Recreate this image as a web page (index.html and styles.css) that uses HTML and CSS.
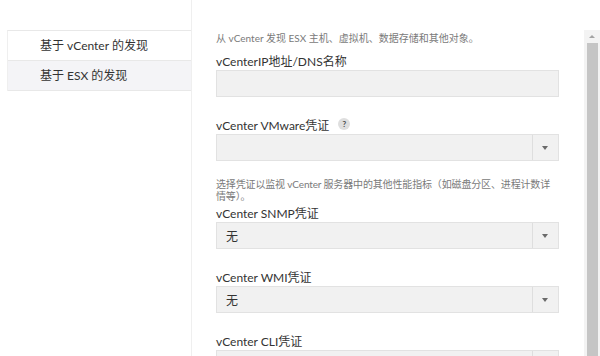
FILE: index.html
```html
<!DOCTYPE html>
<html lang="zh-CN">
<head>
<meta charset="utf-8">
<title>vCenter 发现</title>
<link rel="stylesheet" href="styles.css">
</head>
<body>
<div class="layout">
  <aside class="sidebar">
    <ul class="nav">
      <li class="nav-item">基于 vCenter 的发现</li>
      <li class="nav-item nav-item-alt">基于 ESX 的发现</li>
    </ul>
  </aside>
  <main class="main">
    <form class="form">
      <p class="desc desc-top">从 vCenter 发现 ESX 主机、虚拟机、数据存储和其他对象。</p>
      <div class="group">
        <label class="label">vCenterIP地址/DNS名称</label>
        <div class="input"></div>
      </div>
      <div class="group">
        <label class="label">vCenter VMware凭证<span class="help">?</span></label>
        <div class="select"><span class="value"></span><span class="arrow"></span></div>
      </div>
      <p class="desc desc-mid">选择凭证以监视 vCenter 服务器中的其他性能指标（如磁盘分区、进程计数详情等）。</p>
      <div class="group">
        <label class="label">vCenter SNMP凭证</label>
        <div class="select"><span class="value">无</span><span class="arrow"></span></div>
      </div>
      <div class="group">
        <label class="label">vCenter WMI凭证</label>
        <div class="select"><span class="value">无</span><span class="arrow"></span></div>
      </div>
      <div class="group">
        <label class="label">vCenter CLI凭证</label>
        <div class="select"><span class="value"></span><span class="arrow"></span></div>
      </div>
    </form>
    <div class="scrollbar">
      <div class="scroll-up"></div>
      <div class="scroll-thumb"></div>
    </div>
  </main>
</div>
</body>
</html>
```

FILE: styles.css
```css
html, body {
  margin: 0;
  padding: 0;
  background: #ffffff;
}
body {
  width: 600px;
  height: 356px;
  overflow: hidden;
  font-family: Lato, "Noto Sans CJK SC", sans-serif;
  color: #333333;
}
.layout {
  display: flex;
  height: 356px;
  overflow: hidden;
}
.sidebar {
  width: 192px;
  flex: 0 0 192px;
  border-right: 1px solid #efefef;
  padding-top: 30px;
  padding-left: 7px;
  box-sizing: border-box;
}
.nav {
  list-style: none;
  margin: 0;
  padding: 0;
  border-top: 1px solid #e8e8e8;
  border-left: 1px solid #efefef;
}
.nav-item {
  height: 29px;
  line-height: 29px;
  padding-left: 32px;
  font-size: 12px;
  color: #333333;
  border-bottom: 1px solid #e8e8e8;
  background: #ffffff;
}
.nav-item-alt {
  background: #f4f4f7;
}
.main {
  flex: 1;
  display: flex;
  padding-left: 24px;
  height: 356px;
  overflow: hidden;
}
.form {
  width: 343px;
  flex: 0 0 343px;
  padding-top: 32px;
}
.desc {
  margin: 0;
  font-size: 10px;
  line-height: 12px;
  color: #7a7a7a;
}
.desc-top {
  margin-bottom: 6px;
}
.desc-mid {
  margin-top: 7px;
  margin-bottom: 0;
  letter-spacing: -0.15px;
}
.group {
  margin-bottom: 17px;
}
.label {
  display: flex;
  align-items: center;
  height: 20px;
  font-size: 12px;
  color: #333333;
}
.help {
  display: inline-flex;
  align-items: center;
  justify-content: center;
  width: 12px;
  height: 12px;
  margin-left: 9px;
  border-radius: 50%;
  background: #dedede;
  color: #4a4a4a;
  font-size: 8px;
  font-weight: bold;
  line-height: 1;
}
.input,
.select {
  height: 27px;
  box-sizing: border-box;
  border: 1px solid #e2e2e2;
  background: #f1f1f1;
}
.select {
  display: flex;
  align-items: center;
}
.value {
  flex: 1;
  padding-left: 9px;
  font-size: 12px;
  color: #333333;
}
.arrow {
  position: relative;
  width: 25px;
  height: 100%;
  border-left: 1px solid #dedede;
}
.arrow::after {
  content: "";
  position: absolute;
  left: 9px;
  top: 11px;
  border-left: 3.5px solid transparent;
  border-right: 3.5px solid transparent;
  border-top: 4px solid #6a6a6a;
}
.scrollbar {
  margin-left: auto;
  margin-top: 30px;
  width: 16px;
  flex: 0 0 16px;
  background: #f3f3f3;
  display: flex;
  flex-direction: column;
  align-items: center;
}
.scroll-up {
  margin-top: 5px;
  width: 0;
  height: 0;
  border-left: 3.5px solid transparent;
  border-right: 3.5px solid transparent;
  border-bottom: 3.5px solid #a3a3a3;
}
.scroll-thumb {
  margin-top: 5px;
  width: 11px;
  flex: 1;
  background: #c5c5c5;
}
```
